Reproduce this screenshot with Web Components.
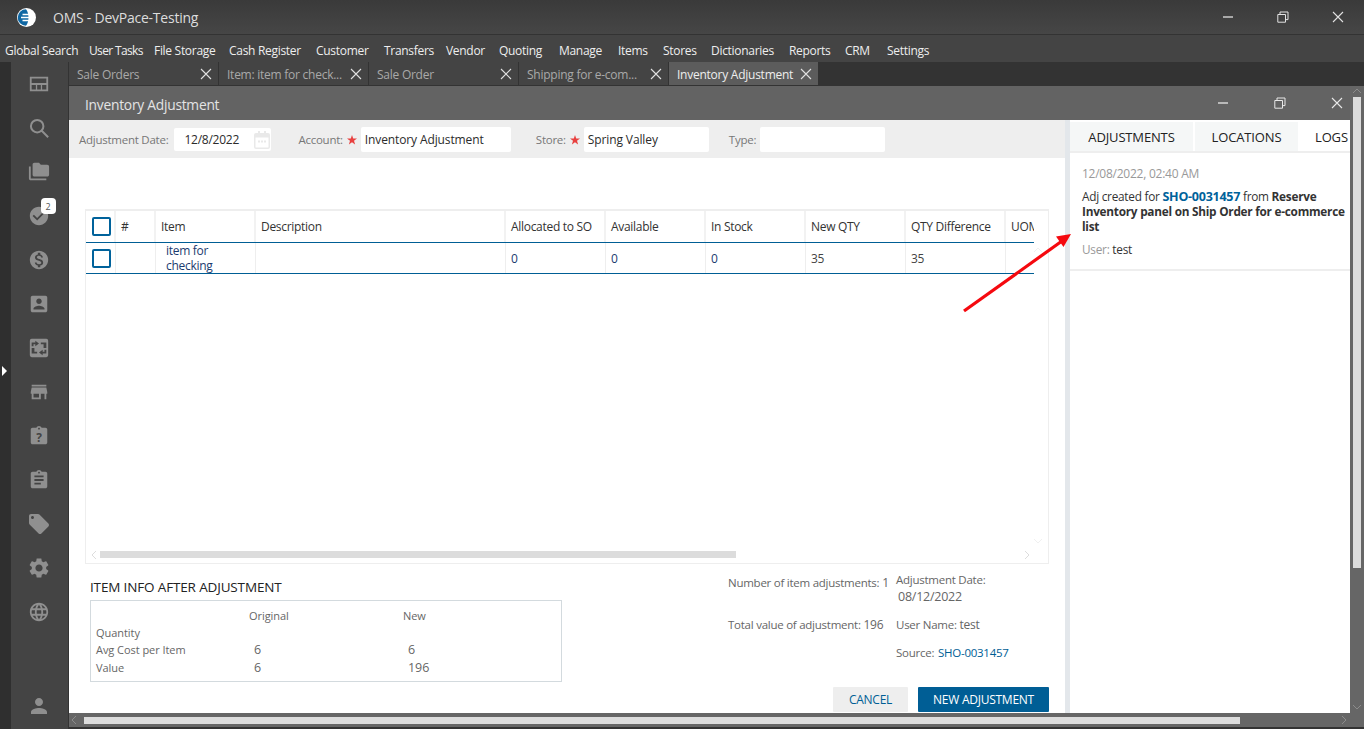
<!DOCTYPE html>
<html>
<head>
<meta charset="utf-8">
<title>OMS - DevPace-Testing</title>
<style>
html,body{margin:0;padding:0;height:100%;overflow:hidden;background:#333}
body{font-family:"Open Sans","Liberation Sans",sans-serif;font-size:12px;letter-spacing:-.25px;color:#333}
</style>
</head>
<body>
<oms-app>
    <oms-titlebar slot="title" label="OMS - DevPace-Testing"></oms-titlebar>
    <oms-menu slot="menu">
        <span style="width:84px">Global Search</span><span style="width:65px;letter-spacing:-.65px">User Tasks</span><span style="width:75px">File Storage</span><span style="width:87px">Cash Register</span><span style="width:68px">Customer</span><span style="width:62px">Transfers</span><span style="width:53px">Vendor</span><span style="width:60px">Quoting</span><span style="width:59px">Manage</span><span style="width:45px">Items</span><span style="width:48px">Stores</span><span style="width:78px">Dictionaries</span><span style="width:56px">Reports</span><span style="width:42px">CRM</span><span>Settings</span>
    </oms-menu>
    <oms-rail slot="rail"></oms-rail>
    <oms-tabs slot="tabs">
        <oms-tab>Sale Orders</oms-tab>
        <oms-tab>Item: item for check...</oms-tab>
        <oms-tab>Sale Order</oms-tab>
        <oms-tab>Shipping for e-com...</oms-tab>
        <oms-tab active>Inventory Adjustment</oms-tab>
    </oms-tabs>
    <oms-window slot="window" label="Inventory Adjustment">
        <oms-toolbar slot="pane"></oms-toolbar>
        <oms-lines slot="pane"></oms-lines>
        <oms-summary slot="pane"></oms-summary>
        <oms-footer slot="pane">
            <oms-button>CANCEL</oms-button>
            <oms-button primary>NEW ADJUSTMENT</oms-button>
        </oms-footer>
        <oms-activity slot="side"></oms-activity>
    </oms-window>
</oms-app>

<script>
const winIcon = {
    min: '<svg width="12" height="12" viewBox="0 0 12 12"><path d="M1 6h10" stroke="currentColor" stroke-width="1.3"/></svg>',
    max: '<svg width="12" height="12" viewBox="0 0 12 12" fill="none" stroke="currentColor"><path d="M.8 3.5h7.7v7.7H.8z"/><path d="M3 3.2V1h8v7.6H8.6"/></svg>',
    close: '<svg width="12" height="12" viewBox="0 0 12 12"><path d="M1 1l10 10M11 1L1 11" stroke="currentColor" stroke-width="1.1"/></svg>'
}

const railIcon = {
    panel: '<path fill-rule="evenodd" d="M2 4h20v16H2zM4 6v5h16V6zM4 13v5h4.6v-5zM10 13v5h4v-5zM15.4 13v5H20v-5z"/>',
    search: '<path fill="none" stroke="currentColor" stroke-width="2.2" d="M10 3.2a6.8 6.8 0 1 0 0 13.6a6.8 6.8 0 1 0 0-13.6zM15 15l7 7"/>',
    folder: '<path d="M3 6H1v13c0 1.1.9 2 2 2h17v-2H3V6z"/><path d="M21 4h-7l-2-2H7c-1.1 0-1.99.9-1.99 2L5 15c0 1.1.9 2 2 2h14c1.1 0 2-.9 2-2V6c0-1.1-.9-2-2-2z"/>',
    check: '<path d="M12 2C6.48 2 2 6.48 2 12s4.48 10 10 10 10-4.48 10-10S17.52 2 12 2zm-2 15l-5-5 1.41-1.41L10 14.17l7.59-7.59L19 8l-9 9z"/>',
    money: '<path d="M12 2C6.48 2 2 6.48 2 12s4.48 10 10 10 10-4.48 10-10S17.52 2 12 2zm1.41 16.09V20h-2.67v-1.93c-1.71-.36-3.16-1.46-3.27-3.4h1.96c.1 1.05.82 1.87 2.65 1.87 1.96 0 2.4-.98 2.4-1.59 0-.83-.44-1.61-2.67-2.14-2.48-.6-4.18-1.62-4.18-3.67 0-1.72 1.39-2.84 3.11-3.21V4h2.67v1.95c1.86.45 2.79 1.86 2.85 3.39H14.3c-.05-1.11-.64-1.87-2.22-1.87-1.5 0-2.4.68-2.4 1.64 0 .84.65 1.39 2.67 1.91s4.18 1.39 4.18 3.91c-.01 1.83-1.38 2.83-3.12 3.16z"/>',
    contact: '<path d="M3 5v14c0 1.1.89 2 2 2h14c1.1 0 2-.9 2-2V5c0-1.1-.9-2-2-2H5c-1.11 0-2 .9-2 2zm12 4c0 1.66-1.34 3-3 3s-3-1.34-3-3 1.34-3 3-3 3 1.34 3 3zm-9 8c0-2 4-3.1 6-3.1s6 1.1 6 3.1v1H6v-1z"/>',
    transfer: '<path fill-rule="evenodd" d="M4 2h16a2 2 0 0 1 2 2v16a2 2 0 0 1-2 2H4a2 2 0 0 1-2-2V4a2 2 0 0 1 2-2zM8 4v2H4v4h2V8h2v2l4-3-4-3zM16 20v-2h4v-4h-2v2h-2v-2l-4 3 4 3zM7 12H4v6h6v-2H7zM17 12h3V6h-6v2h3z"/>',
    store: '<path d="M20 4H4v2h16V4zm1 10v-2l-1-5H4l-1 5v2h1v6h10v-6h4v6h2v-6h1zm-9 4H6v-4h6v4z"/>',
    clipask: '<path d="M19 3h-4.18C14.4 1.84 13.3 1 12 1c-1.3 0-2.4.84-2.82 2H5c-1.1 0-2 .9-2 2v14c0 1.1.9 2 2 2h14c1.1 0 2-.9 2-2V5c0-1.1-.9-2-2-2zm-7 0c.55 0 1 .45 1 1s-.45 1-1 1-1-.45-1-1 .45-1 1-1z"/><text x="12" y="18.4" text-anchor="middle" font-size="13" font-weight="700" fill="#444" font-family="Open Sans">?</text>',
    clip: '<path d="M19 3h-4.18C14.4 1.84 13.3 1 12 1c-1.3 0-2.4.84-2.82 2H5c-1.1 0-2 .9-2 2v14c0 1.1.9 2 2 2h14c1.1 0 2-.9 2-2V5c0-1.1-.9-2-2-2zm-7 0c.55 0 1 .45 1 1s-.45 1-1 1-1-.45-1-1 .45-1 1-1zm2 14H7v-2h7v2zm3-4H7v-2h10v2zm0-4H7V7h10v2z"/>',
    tag: '<path d="M21.41 11.58l-9-9C12.05 2.22 11.55 2 11 2H4c-1.1 0-2 .9-2 2v7c0 .55.22 1.05.59 1.42l9 9c.36.36.86.58 1.41.58.55 0 1.05-.22 1.41-.59l7-7c.37-.36.59-.86.59-1.41 0-.55-.23-1.06-.59-1.42zM5.5 7C4.67 7 4 6.33 4 5.5S4.67 4 5.5 4 7 4.67 7 5.5 6.33 7 5.5 7z"/>',
    gear: '<path d="M19.14 12.94c.04-.3.06-.61.06-.94 0-.32-.02-.64-.07-.94l2.03-1.58c.18-.14.23-.41.12-.61l-1.92-3.32c-.12-.22-.37-.29-.59-.22l-2.39.96c-.5-.38-1.03-.7-1.62-.94l-.36-2.54c-.04-.24-.24-.41-.48-.41h-3.84c-.24 0-.43.17-.47.41l-.36 2.54c-.59.24-1.13.57-1.62.94l-2.39-.96c-.22-.08-.47 0-.59.22L2.74 8.87c-.12.21-.08.47.12.61l2.03 1.58c-.05.3-.09.63-.09.94s.02.64.07.94l-2.03 1.58c-.18.14-.23.41-.12.61l1.92 3.32c.12.22.37.29.59.22l2.39-.96c.5.38 1.03.7 1.62.94l.36 2.54c.05.24.24.41.48.41h3.84c.24 0 .44-.17.47-.41l.36-2.54c.59-.24 1.13-.56 1.62-.94l2.39.96c.22.08.47 0 .59-.22l1.92-3.32c.12-.22.07-.47-.12-.61l-2.01-1.58zM12 15.6c-1.98 0-3.6-1.62-3.6-3.6s1.62-3.6 3.6-3.6 3.6 1.62 3.6 3.6-1.62 3.6-3.6 3.6z"/>',
    globe: '<path d="M11.99 2C6.47 2 2 6.48 2 12s4.47 10 9.99 10C17.52 22 22 17.52 22 12S17.52 2 11.99 2zm6.93 6h-2.95c-.32-1.25-.78-2.45-1.38-3.56 1.84.63 3.37 1.91 4.33 3.56zM12 4.04c.83 1.2 1.48 2.53 1.91 3.96h-3.82c.43-1.43 1.08-2.76 1.91-3.96zM4.26 14C4.1 13.36 4 12.69 4 12s.1-1.36.26-2h3.38c-.08.66-.14 1.32-.14 2 0 .68.06 1.34.14 2H4.26zm.82 2h2.95c.32 1.25.78 2.45 1.38 3.56-1.84-.63-3.37-1.9-4.33-3.56zm2.95-8H5.08c.96-1.66 2.49-2.93 4.33-3.56C8.81 5.55 8.35 6.75 8.03 8zM12 19.96c-.83-1.2-1.48-2.53-1.91-3.96h3.82c-.43 1.43-1.08 2.76-1.91 3.96zM14.34 14H9.66c-.09-.66-.16-1.32-.16-2 0-.68.07-1.35.16-2h4.68c.09.65.16 1.32.16 2 0 .68-.07 1.34-.16 2zm.25 5.56c.6-1.11 1.06-2.31 1.38-3.56h2.95c-.96 1.65-2.49 2.93-4.33 3.56zM16.36 14c.08-.66.14-1.32.14-2 0-.68-.06-1.34-.14-2h3.38c.16.64.26 1.31.26 2s-.1 1.36-.26 2h-3.38z"/>',
    person: '<path d="M12 12c2.21 0 4-1.79 4-4s-1.79-4-4-4-4 1.79-4 4 1.79 4 4 4zm0 2c-2.67 0-8 1.34-8 4v2h16v-2c0-2.66-5.33-4-8-4z"/>'
}

class OmsElement extends HTMLElement{
    constructor(){
        super()
        this.attachShadow({mode: 'open'}).innerHTML = this.render()
    }
    attr(name, fallback){
        return this.getAttribute(name) || fallback
    }
}

class OmsApp extends OmsElement{
    render(){
        return `
            <style>
                :host{display:grid;grid-template-columns:69px 1fr;grid-template-rows:35px 27px 24px 1fr;width:1364px;height:729px;position:relative;overflow:hidden}
                ::slotted([slot=title]),::slotted([slot=menu]){grid-column:1 / 3}
                ::slotted([slot=rail]){grid-row:3 / 5}
                .arrow{position:absolute;left:955px;top:225px}
            </style>
            <slot name="title"></slot>
            <slot name="menu"></slot>
            <slot name="rail"></slot>
            <slot name="tabs"></slot>
            <slot name="window"></slot>
            <svg class="arrow" width="125" height="95" viewBox="955 225 125 95">
                <path d="M964 311L1062 241" stroke="#f5090f" stroke-width="3.200" fill="none"/>
                <path d="M1071 234L1056 236.500L1063.500 247z" fill="#f5090f"/>
            </svg>
        `
    }
}

class OmsTitlebar extends OmsElement{
    render(){
        return `
            <style>
                :host{display:flex;align-items:center;height:34px;border-bottom:1px solid #333;background:linear-gradient(#3a3a3a,#464646);color:#ddd;font-size:14px;letter-spacing:-.24px}
                .logo{margin-left:16px;width:21px;height:21px;flex:none}
                .label{margin-left:16px;flex:1}
                .ctl{display:flex;color:#e2e2e2;margin-right:-1px}
                .ctl span{width:55px;display:flex;justify-content:center}
            </style>
            <svg class="logo" viewBox="0 0 21 21">
                <circle cx="10.500" cy="10.500" r="9.500" fill="#fff"/>
                <path d="M10 2.200a8.300 8.300 0 0 0 0 16.600c1.500-2 2.500-4.500 2.500-8.300s-1-6.300-2.500-8.300z" fill="#0f67a3"/>
                <path d="M6.500 7.500h7.500M5 10.500h11M6.500 13.500h7.500" stroke="#fff" stroke-width="1.400"/>
            </svg>
            <span class="label">${this.attr('label', '')}</span>
            <div class="ctl"><span>${winIcon.min}</span><span>${winIcon.max}</span><span>${winIcon.close}</span></div>
        `
    }
}

class OmsMenu extends OmsElement{
    render(){
        return `
            <style>
                :host{display:flex;align-items:center;padding:3px 0 0 5px;box-sizing:border-box;height:27px;background:#444;color:#eee;font-size:12px;letter-spacing:-.3px;white-space:nowrap}
                ::slotted(span){flex:none}
            </style>
            <slot></slot>
        `
    }
}

class OmsRail extends OmsElement{
    render(){
        const names = ['panel','search','folder','check','money','contact','transfer','store','clipask','clip','tag','gear','globe']
        const cells = names.map(n => {
            const size = (n == 'gear' || n == 'tag') ? 24 : 22
            return `
            <div class="cell">
                <svg width="${size}" height="${size}" viewBox="0 0 24 24" fill="currentColor">${railIcon[n]}</svg>
                ${n == 'check' ? '<b class="badge">2</b>' : ''}
            </div>`
        }).join('')
        return `
            <style>
                :host{display:flex;background:#444;border-right:1px solid #333;box-sizing:border-box;height:100%;min-height:0}
                .strip{width:11px;flex:none;background:#2f2f2f;position:relative}
                .mark{position:absolute;left:2px;top:304px;width:0;height:0;border-left:5px solid #fff;border-top:5px solid transparent;border-bottom:5px solid transparent}
                .col{flex:1;display:flex;flex-direction:column;align-items:center;padding:0 2px 0 0}
                .cell{height:44px;width:44px;flex:none;display:flex;align-items:center;justify-content:center;position:relative;color:#8f8f8f}
                .cell:last-child{margin-top:auto;margin-bottom:1px}
                .badge{position:absolute;left:24px;top:4px;width:15px;height:16px;border-radius:4px;background:#fff;color:#555;font:400 9px "Open Sans",sans-serif;display:flex;align-items:center;justify-content:center}
            </style>
            <div class="strip"><i class="mark"></i></div>
            <div class="col">
                ${cells}
                <div class="cell"><svg width="24" height="24" viewBox="0 0 24 24" fill="currentColor">${railIcon.person}</svg></div>
            </div>
        `
    }
}

class OmsTabs extends OmsElement{
    render(){
        return `
            <style>
                :host{display:flex;background:#333;height:24px;box-sizing:border-box;padding-bottom:1px;min-width:0}
            </style>
            <slot></slot>
        `
    }
}

class OmsTab extends OmsElement{
    render(){
        return `
            <style>
                :host{display:flex;align-items:center;width:149px;margin-right:1px;padding:0 6px 0 8px;box-sizing:border-box;background:#444;color:#a9a9a9;white-space:nowrap;font-size:12px}
                :host([active]){background:#5c5c5c;color:#eee}
                .t{flex:1;overflow:hidden;padding-top:2px}
                svg{flex:none;color:#e0e0e0}
            </style>
            <span class="t"><slot></slot></span>${winIcon.close}
        `
    }
}

class OmsWindow extends OmsElement{
    render(){
        return `
            <style>
                :host{display:grid;grid-template-columns:1fr 14px;grid-template-rows:1fr 14px 2px;min-height:0;min-width:0;height:643px;background:#666}
                .frame{display:flex;flex-direction:column;min-height:0}
                .head{height:34px;flex:none;background:#636363;display:flex;align-items:center;color:#e4e4e4;font-size:13.800px;padding-left:16px}
                .head .t{flex:1;padding-top:2px}
                .ctl{display:flex;color:#e8e8e8;margin-right:-15px}
                .ctl span{width:57px;display:flex;justify-content:center}
                .body{flex:1;display:flex;min-height:0;background:#fff}
                .pane{flex:1;display:flex;flex-direction:column;min-width:0}
                .side{width:285px;flex:none;box-sizing:border-box;border-left:5px solid #e3e7eb;display:flex}
                .vbar{display:flex;flex-direction:column;align-items:center;padding-top:2px;box-sizing:border-box;color:#8c8c8c}
                .vbar .thumb{width:8px;height:471px;background:#dcdcdc;margin-top:3px}
                .vbar .end{margin-top:auto;margin-bottom:3px}
                .hbar{display:flex;align-items:center;padding:0 3px 0 2px;color:#8c8c8c}
                .hbar .thumb{height:7px;width:1156px;background:#dcdcdc;margin-left:7px}
                .hbar .end{margin-left:auto}
                .edge{grid-column:1 / 3;background:#333}
            </style>
            <div class="frame">
                <div class="head">
                    <span class="t">${this.attr('label', '')}</span>
                    <div class="ctl"><span>${winIcon.min}</span><span>${winIcon.max}</span><span>${winIcon.close}</span></div>
                </div>
                <div class="body">
                    <div class="pane"><slot name="pane"></slot></div>
                    <div class="side"><slot name="side"></slot></div>
                </div>
            </div>
            <div class="vbar">
                <svg width="10" height="6" viewBox="0 0 10 6" fill="none" stroke="currentColor"><path d="M1 5l4-4 4 4"/></svg>
                <div class="thumb"></div>
                <svg class="end" width="10" height="6" viewBox="0 0 10 6" fill="none" stroke="currentColor"><path d="M1 1l4 4 4-4"/></svg>
            </div>
            <div class="hbar">
                <svg width="6" height="10" viewBox="0 0 6 10" fill="none" stroke="currentColor"><path d="M5 1L1 5l4 4"/></svg>
                <div class="thumb"></div>
                <svg class="end" width="6" height="10" viewBox="0 0 6 10" fill="none" stroke="currentColor"><path d="M1 1l4 4-4 4"/></svg>
            </div>
            <div></div>
            <div class="edge"></div>
        `
    }
}

class OmsField extends OmsElement{
    render(){
        const star = this.hasAttribute('required') ? '<svg class="star" width="10" height="10" viewBox="0 0 10 10"><path d="M5 0l1.200 3.500H10L7 5.800l1.100 3.700L5 7.300 1.900 9.500 3 5.800 0 3.500h3.800z" fill="#e8403f"/></svg>' : ''
        const cal = this.hasAttribute('date') ? '<svg class="cal" width="16" height="18" viewBox="0 0 16 18" fill="#e9e9e9"><path fill-rule="evenodd" d="M2 2h2V0h2v2h4V0h2v2h2a2 2 0 0 1 2 2v12a2 2 0 0 1-2 2H2a2 2 0 0 1-2-2V4a2 2 0 0 1 2-2zM1.500 6.500V16a.5.5 0 0 0 .5.5h12a.5.5 0 0 0 .5-.5V6.500zM4 9.500h2v2H4zM7 9.500h2v2H7zM10 9.500h2v2h-2z"/></svg>' : ''
        return `
            <style>
                :host{display:flex;align-items:center;color:#777}
                .star{margin:0 4px 0 4px;flex:none}
                .box{display:flex;align-items:center;box-sizing:border-box;height:25px;background:#fff;border-radius:2px;color:#2b2b2b;white-space:nowrap;letter-spacing:-.12px}
                .cal{margin-left:auto;margin-right:1px}
                :host([date]) .box{height:23px;padding-right:0;letter-spacing:-.25px}
                .lab{white-space:nowrap;font-size:11.500px}
            </style>
            <span class="lab">${this.attr('label', '')}</span>${star}
            <div class="box" style="width:${this.attr('width', '125')}px;padding-left:${this.attr('inset', '4')}px;margin-left:${this.attr('gap', '0')}px">${this.attr('value', '')}${cal}</div>
        `
    }
}

class OmsToolbar extends OmsElement{
    render(){
        return `
            <style>
                :host{display:flex;align-items:center;height:38px;flex:none;box-sizing:border-box;background:#eee;padding:1px 0 0 10px}
                .a{margin-left:27px}
                .b{margin-left:25px}
                .c{margin-left:20px}
            </style>
            <oms-field date label="Adjustment Date:" value="12/8/2022" width="97" inset="10" gap="6"></oms-field>
            <oms-field class="a" label="Account:" required value="Inventory Adjustment" width="150"></oms-field>
            <oms-field class="b" label="Store:" required value="Spring Valley" width="125"></oms-field>
            <oms-field class="c" label="Type:" width="125" gap="4"></oms-field>
        `
    }
}

class OmsLines extends OmsElement{
    render(){
        const box = '<i class="box"></i>'
        const head = ['#','Item','Description','Allocated to SO','Available','In Stock','New QTY','QTY Difference','UOM']
        const row = ['','item for<br>checking','','0','0','0','35','35','']
        return `
            <style>
                :host{display:block;flex:none;box-sizing:border-box;margin:51px 16px 0;height:355px;border:1px solid #eee;border-top:2px solid #eee;position:relative;color:#333;letter-spacing:-.3px}
                .clip{width:948px;overflow:hidden}
                .g{display:grid;grid-template-columns:30px 40px 100px 250px repeat(5,100px) 100px;width:1020px}
                .g > div{box-sizing:border-box;display:flex;align-items:center;padding-left:5px;border-right:1px solid #eee;white-space:nowrap;overflow:hidden}
                .h > div{height:31px;border-right:2px solid #f2f2f2;padding-bottom:1px}
                .rule{height:1px;background:#005e95}
                .r > div{height:30px;line-height:15px;color:#1b3b6f}
                .r > div.n{color:#444}
                .r > div.item{padding-left:10px;align-items:center;white-space:normal}
                .box{display:block;width:15px;height:15px;border:2px solid #00629b;border-radius:2px;flex:none;margin-left:1px}
                .bar{position:absolute;left:0;right:0;bottom:5px;height:7px;display:flex;align-items:center;color:#ddd}
                .bar .thumb{position:absolute;left:14px;width:636px;height:7px;background:#dcdcdc}
                .bar .l{position:absolute;left:5px}
                .bar .rt{position:absolute;left:938px}
                .up{position:absolute;right:5px;top:36px;color:#f0f0f0}
                .dn{position:absolute;right:5px;bottom:19px;color:#f0f0f0}
            </style>
            <div class="clip">
                <div class="g h"><div>${box}</div>${head.map(h => `<div>${h}</div>`).join('')}</div>
                <div class="rule"></div>
                <div class="g r"><div>${box}</div>${row.map((c, i) => `<div class="${i == 1 ? 'item' : i > 5 ? 'n' : ''}">${c}</div>`).join('')}</div>
                <div class="rule"></div>
            </div>
            <svg class="up" width="10" height="6" viewBox="0 0 10 6" fill="none" stroke="currentColor"><path d="M1 5l4-4 4 4"/></svg>
            <svg class="dn" width="10" height="6" viewBox="0 0 10 6" fill="none" stroke="currentColor"><path d="M1 1l4 4 4-4"/></svg>
            <div class="bar">
                <svg class="l" width="6" height="10" viewBox="0 0 6 10" fill="none" stroke="currentColor"><path d="M5 1L1 5l4 4"/></svg>
                <div class="thumb"></div>
                <svg class="rt" width="6" height="10" viewBox="0 0 6 10" fill="none" stroke="currentColor"><path d="M1 1l4 4-4 4"/></svg>
            </div>
        `
    }
}

class OmsSummary extends OmsElement{
    render(){
        return `
            <style>
                :host{display:grid;grid-template-columns:638px 168px 1fr;height:123px;flex:none;box-sizing:border-box;padding-left:21px;color:#666;font-size:11.500px}
                h3{margin:15px 0 4px;font-size:13.500px;font-weight:400;color:#222;line-height:17px;letter-spacing:-.15px;white-space:nowrap}
                .info{box-sizing:border-box;width:472px;height:82px;border:1px solid #d3dade;padding:6px 5px 0;display:grid;grid-template-columns:153px 154px 1fr;grid-template-rows:17px 17px 17px 18px;line-height:17px;font-size:11px;letter-spacing:-.05px}
                .info .last{align-self:end}
                .info .v{padding-left:5px;font-size:12.500px}
                .stat{padding-top:10px}
                .line{height:17px;line-height:17px;white-space:nowrap}
                .t1{margin-bottom:25px}
                .d{padding-top:8px}
                .d .val{padding:2px 0 0 2px;font-size:12.500px;line-height:15px;margin-bottom:12px}
                .d .line{margin-bottom:11px}
                a{color:#005e95;text-decoration:none;margin-left:1px;font-size:11.500px}
                .big{font-size:12px}
            </style>
            <div>
                <h3>ITEM INFO AFTER ADJUSTMENT</h3>
                <div class="info">
                    <span></span><span>Original</span><span>New</span>
                    <span>Quantity</span><span></span><span></span>
                    <span>Avg Cost per Item</span><span class="v">6</span><span class="v">6</span>
                    <span class="last">Value</span><span class="v last">6</span><span class="v last">196</span>
                </div>
            </div>
            <div class="stat">
                <div class="line t1">Number of item adjustments: <span class="big">1</span></div>
                <div class="line">Total value of adjustment: <span class="big">196</span></div>
            </div>
            <div class="d">
                <div class="line" style="margin:0;height:15px;line-height:15px">Adjustment Date:</div>
                <div class="val">08/12/2022</div>
                <div class="line">User Name: <span class="big">test</span></div>
                <div class="line">Source: <a>SHO-0031457</a></div>
            </div>
        `
    }
}

class OmsFooter extends OmsElement{
    render(){
        return `
            <style>
                :host{display:flex;justify-content:flex-end;gap:10px;padding-right:16px;height:25px;flex:none}
            </style>
            <slot></slot>
        `
    }
}

class OmsButton extends OmsElement{
    render(){
        return `
            <style>
                :host{display:flex;align-items:center;justify-content:center;box-sizing:border-box;height:25px;width:75px;background:#eee;color:#005e95;font-size:12px;border-radius:1px}
                :host([primary]){width:131px;background:#005e95;color:#fff}
            </style>
            <slot></slot>
        `
    }
}

class OmsActivity extends OmsElement{
    render(){
        return `
            <style>
                :host{display:flex;flex-direction:column;flex:1;min-width:0;overflow:hidden}
                .tabs{display:flex;gap:2px;height:33px;flex:none;box-sizing:border-box;padding-top:2px;border-bottom:2px solid #eee;color:#222;font-size:13px;letter-spacing:-.15px}
                .tabs span{display:flex;align-items:center;justify-content:center;background:#f5f7f7;white-space:nowrap}
                .entry{padding:13px 5px 12px 12px;border-bottom:2px solid #eee;color:#333;line-height:15px;font-size:11.800px}
                .when{color:#999;margin-bottom:8px;font-size:12px}
                .who{margin-top:8px;color:#999}
                .who span{color:#333}
                a{color:#00629b;font-weight:700;text-decoration:none;font-size:12.500px}
                b{font-weight:700;color:#333}
            </style>
            <div class="tabs">
                <span style="width:123px">ADJUSTMENTS</span>
                <span style="width:103px">LOCATIONS</span>
                <span style="width:50px;background:#fff;padding-left:15px;box-sizing:border-box;justify-content:flex-start">LOGS</span>
            </div>
            <div class="entry">
                <div class="when">12/08/2022, 02:40 AM</div>
                <div>Adj created for <a>SHO-0031457</a> from <b>Reserve</b></div>
                <div><b>Inventory panel on Ship Order for e-commerce</b></div>
                <div><b>list</b></div>
                <div class="who">User: <span>test</span></div>
            </div>
        `
    }
}

customElements.define('oms-app', OmsApp)
customElements.define('oms-titlebar', OmsTitlebar)
customElements.define('oms-menu', OmsMenu)
customElements.define('oms-rail', OmsRail)
customElements.define('oms-tabs', OmsTabs)
customElements.define('oms-tab', OmsTab)
customElements.define('oms-window', OmsWindow)
customElements.define('oms-field', OmsField)
customElements.define('oms-toolbar', OmsToolbar)
customElements.define('oms-lines', OmsLines)
customElements.define('oms-summary', OmsSummary)
customElements.define('oms-footer', OmsFooter)
customElements.define('oms-button', OmsButton)
customElements.define('oms-activity', OmsActivity)
</script>
</body>
</html>
